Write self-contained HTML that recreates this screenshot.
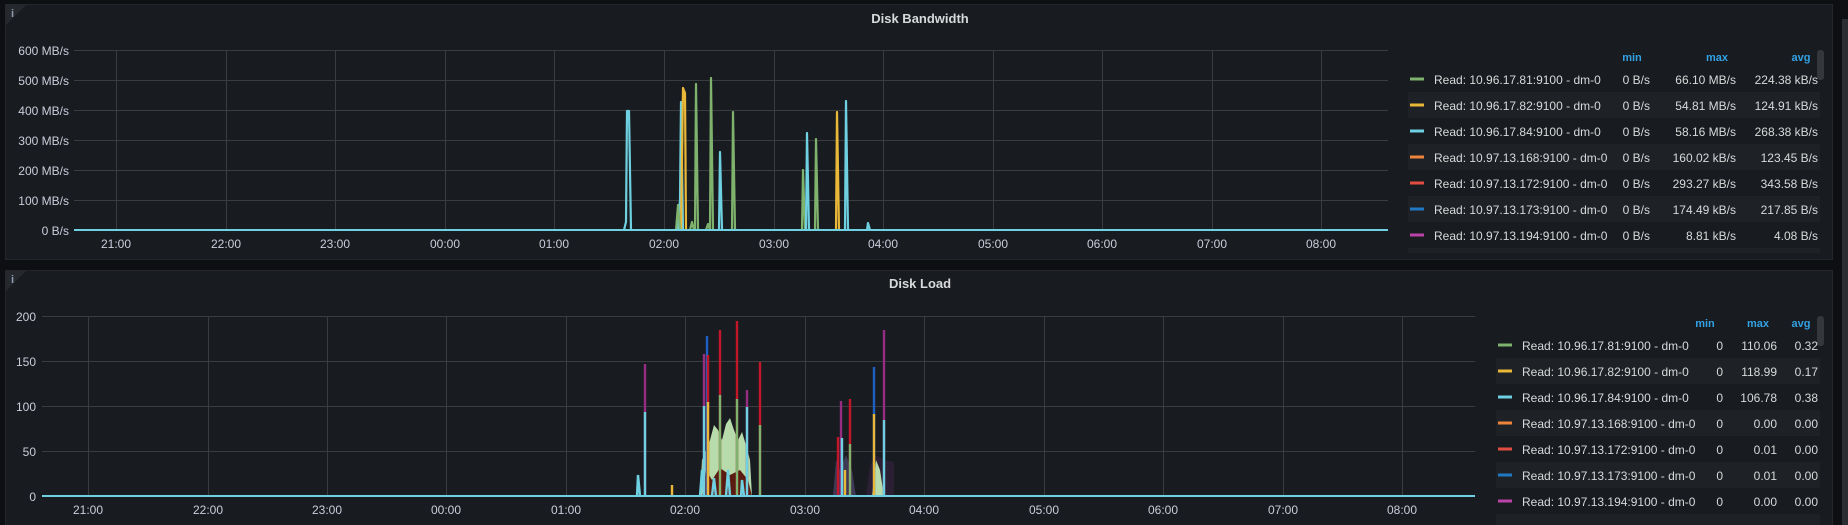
<!DOCTYPE html>
<html><head><meta charset="utf-8"><style>
html,body{margin:0;padding:0;background:#0e0f12;width:1848px;height:525px;overflow:hidden}
svg{display:block}
text{font-family:"Liberation Sans",sans-serif}
</style></head><body>
<svg width="1848" height="525" xmlns="http://www.w3.org/2000/svg">
<rect width="1848" height="525" fill="#0e0f12"/>
<!-- scrollbar -->
<rect x="1842" y="19" width="6" height="506" fill="#2a2d31"/>
<!-- panels -->
<rect x="5.5" y="4.5" width="1827" height="255" fill="#181b1f" stroke="#24262b"/>
<rect x="5.5" y="270.5" width="1827" height="260" fill="#181b1f" stroke="#24262b"/>
<polygon points="6,5 26,5 6,25" fill="#25282d"/>
<polygon points="6,271 26,271 6,291" fill="#25282d"/>
<text x="11" y="17" font-size="11" font-weight="bold" fill="#8e9bb0">i</text>
<text x="11" y="283" font-size="11" font-weight="bold" fill="#8e9bb0">i</text>
<text x="920" y="23" font-size="13" font-weight="bold" fill="#d8d9da" text-anchor="middle">Disk Bandwidth</text>
<text x="920" y="288" font-size="13" font-weight="bold" fill="#d8d9da" text-anchor="middle">Disk Load</text>

<!-- Panel 1 grid -->
<g stroke="#3a3c40" stroke-width="1">
<line x1="74" y1="50.5" x2="1388" y2="50.5"/><line x1="74" y1="80.5" x2="1388" y2="80.5"/>
<line x1="74" y1="110.5" x2="1388" y2="110.5"/><line x1="74" y1="140.5" x2="1388" y2="140.5"/>
<line x1="74" y1="170.5" x2="1388" y2="170.5"/><line x1="74" y1="200.5" x2="1388" y2="200.5"/>
<line x1="116.5" y1="50" x2="116.5" y2="230"/><line x1="226.5" y1="50" x2="226.5" y2="230"/>
<line x1="335.5" y1="50" x2="335.5" y2="230"/><line x1="445.5" y1="50" x2="445.5" y2="230"/>
<line x1="554.5" y1="50" x2="554.5" y2="230"/><line x1="664.5" y1="50" x2="664.5" y2="230"/>
<line x1="774.5" y1="50" x2="774.5" y2="230"/><line x1="883.5" y1="50" x2="883.5" y2="230"/>
<line x1="993.5" y1="50" x2="993.5" y2="230"/><line x1="1102.5" y1="50" x2="1102.5" y2="230"/>
<line x1="1212.5" y1="50" x2="1212.5" y2="230"/><line x1="1321.5" y1="50" x2="1321.5" y2="230"/>
</g>
<g font-size="12" fill="#ccccdc" text-anchor="end">
<text x="69" y="55">600 MB/s</text><text x="69" y="85">500 MB/s</text><text x="69" y="115">400 MB/s</text>
<text x="69" y="145">300 MB/s</text><text x="69" y="175">200 MB/s</text><text x="69" y="205">100 MB/s</text><text x="69" y="235">0 B/s</text>
</g>
<g font-size="12" fill="#ccccdc" text-anchor="middle">
<text x="116" y="248">21:00</text><text x="226" y="248">22:00</text><text x="335" y="248">23:00</text>
<text x="445" y="248">00:00</text><text x="554" y="248">01:00</text><text x="664" y="248">02:00</text>
<text x="774" y="248">03:00</text><text x="883" y="248">04:00</text><text x="993" y="248">05:00</text>
<text x="1102" y="248">06:00</text><text x="1212" y="248">07:00</text><text x="1321" y="248">08:00</text>
</g>
<!-- Panel 1 spikes -->
<g stroke-width="2.2" fill="none" stroke-linejoin="round">
<path d="M624,230 L626,222 L627,111 L629,111 L631,230" stroke="#6ed0e0"/>
<path d="M678,230 L680,200 L681,102 L683,230" stroke="#6ed0e0"/>
<path d="M681,230 L683,88 L685,93 L686,230" stroke="#eab839"/>
<path d="M695,230 L696,84 L698,230" stroke="#7eb26d"/>
<path d="M710,230 L711,78 L713,230" stroke="#7eb26d"/>
<path d="M719,230 L720,152 L722,230" stroke="#6ed0e0"/>
<path d="M732,230 L733,112 L735,230" stroke="#7eb26d"/>
<path d="M802,230 L803,170 L805,230" stroke="#7eb26d"/>
<path d="M806,230 L807,133 L809,230" stroke="#6ed0e0"/>
<path d="M815,230 L816,139 L818,230" stroke="#7eb26d"/>
<path d="M836,230 L837,112 L839,230" stroke="#eab839"/>
<path d="M845,230 L846,101 L848,230" stroke="#6ed0e0"/>
<path d="M867,230 L868,223 L870,230" stroke="#6ed0e0"/>
<path d="M676,230 L678,205 L680,230 M690,230 L692,222 L694,230 M706,230 L708,224 L710,230" stroke="#7eb26d"/>
</g>
<line x1="74" y1="230" x2="1388" y2="230" stroke="#6ed0e0" stroke-width="2"/>

<!-- Panel 1 legend -->
<rect x="1408" y="92" width="412" height="26" fill="#1e2125"/>
<rect x="1408" y="144" width="412" height="26" fill="#1e2125"/>
<rect x="1408" y="196" width="412" height="26" fill="#1e2125"/>
<rect x="1408" y="248" width="412" height="5" fill="#1e2125"/>
<rect x="1817" y="50" width="7" height="30" rx="3" fill="#34373c"/>
<g font-size="11" font-weight="bold" fill="#33a2e5" text-anchor="middle">
<text x="1632" y="61">min</text><text x="1717" y="61">max</text><text x="1801" y="61">avg</text>
</g>
<g font-size="12" fill="#d8d9da">
<rect x="1410" y="77.5" width="14" height="3" fill="#7eb26d"/><text x="1434" y="84">Read: 10.96.17.81:9100 - dm-0</text>
<rect x="1410" y="103.5" width="14" height="3" fill="#eab839"/><text x="1434" y="110">Read: 10.96.17.82:9100 - dm-0</text>
<rect x="1410" y="129.5" width="14" height="3" fill="#6ed0e0"/><text x="1434" y="136">Read: 10.96.17.84:9100 - dm-0</text>
<rect x="1410" y="155.5" width="14" height="3" fill="#ef843c"/><text x="1434" y="162">Read: 10.97.13.168:9100 - dm-0</text>
<rect x="1410" y="181.5" width="14" height="3" fill="#e24d42"/><text x="1434" y="188">Read: 10.97.13.172:9100 - dm-0</text>
<rect x="1410" y="207.5" width="14" height="3" fill="#1f78c1"/><text x="1434" y="214">Read: 10.97.13.173:9100 - dm-0</text>
<rect x="1410" y="233.5" width="14" height="3" fill="#ba43a9"/><text x="1434" y="240">Read: 10.97.13.194:9100 - dm-0</text>
</g>
<g font-size="12" fill="#d8d9da" text-anchor="end">
<text x="1650" y="84">0 B/s</text><text x="1736" y="84">66.10 MB/s</text><text x="1818" y="84">224.38 kB/s</text>
<text x="1650" y="110">0 B/s</text><text x="1736" y="110">54.81 MB/s</text><text x="1818" y="110">124.91 kB/s</text>
<text x="1650" y="136">0 B/s</text><text x="1736" y="136">58.16 MB/s</text><text x="1818" y="136">268.38 kB/s</text>
<text x="1650" y="162">0 B/s</text><text x="1736" y="162">160.02 kB/s</text><text x="1818" y="162">123.45 B/s</text>
<text x="1650" y="188">0 B/s</text><text x="1736" y="188">293.27 kB/s</text><text x="1818" y="188">343.58 B/s</text>
<text x="1650" y="214">0 B/s</text><text x="1736" y="214">174.49 kB/s</text><text x="1818" y="214">217.85 B/s</text>
<text x="1650" y="240">0 B/s</text><text x="1736" y="240">8.81 kB/s</text><text x="1818" y="240">4.08 B/s</text>
</g>

<!-- Panel 2 grid -->
<g stroke="#3a3c40" stroke-width="1">
<line x1="42" y1="316.5" x2="1475" y2="316.5"/><line x1="42" y1="361.5" x2="1475" y2="361.5"/>
<line x1="42" y1="406.5" x2="1475" y2="406.5"/><line x1="42" y1="451.5" x2="1475" y2="451.5"/>
<line x1="88.5" y1="316" x2="88.5" y2="496"/><line x1="208.5" y1="316" x2="208.5" y2="496"/>
<line x1="327.5" y1="316" x2="327.5" y2="496"/><line x1="446.5" y1="316" x2="446.5" y2="496"/>
<line x1="566.5" y1="316" x2="566.5" y2="496"/><line x1="685.5" y1="316" x2="685.5" y2="496"/>
<line x1="805.5" y1="316" x2="805.5" y2="496"/><line x1="924.5" y1="316" x2="924.5" y2="496"/>
<line x1="1044.5" y1="316" x2="1044.5" y2="496"/><line x1="1163.5" y1="316" x2="1163.5" y2="496"/>
<line x1="1283.5" y1="316" x2="1283.5" y2="496"/><line x1="1402.5" y1="316" x2="1402.5" y2="496"/>
</g>
<g font-size="12" fill="#ccccdc" text-anchor="end">
<text x="36" y="321">200</text><text x="36" y="366">150</text><text x="36" y="411">100</text>
<text x="36" y="456">50</text><text x="36" y="501">0</text>
</g>
<g font-size="12" fill="#ccccdc" text-anchor="middle">
<text x="88" y="514">21:00</text><text x="208" y="514">22:00</text><text x="327" y="514">23:00</text>
<text x="446" y="514">00:00</text><text x="566" y="514">01:00</text><text x="685" y="514">02:00</text>
<text x="805" y="514">03:00</text><text x="924" y="514">04:00</text><text x="1044" y="514">05:00</text>
<text x="1163" y="514">06:00</text><text x="1283" y="514">07:00</text><text x="1402" y="514">08:00</text>
</g>
<!-- Panel 2 clutter areas -->
<polygon points="700,496 702,460 706,450 710,440 714,425 718,430 722,440 726,424 730,418 734,430 738,440 742,432 746,445 750,460 752,496" fill="#b7dbab"/>
<polygon points="702,496 706,470 712,480 720,468 730,475 740,470 748,480 752,496" fill="#5a1b10"/>
<polygon points="833,496 836,460 840,470 846,455 852,470 856,496" fill="#3e3a55"/>
<polygon points="866,496 870,465 876,455 884,460 894,462 894,496" fill="#2b1f33"/>
<polygon points="872,496 876,460 880,470 884,496" fill="#b7dbab"/>
<!-- Panel 2 spikes -->
<g stroke-width="2.4" fill="none">
<path d="M645,496 L645,364" stroke="#962d82"/><path d="M645,496 L645,412" stroke="#6ed0e0"/>
<path d="M637,496 L638,475 L640,496" stroke="#6ed0e0"/>
<path d="M704,496 L704,354" stroke="#962d82"/><path d="M704,496 L704,406" stroke="#6ed0e0"/>
<path d="M707,496 L707,336" stroke="#1f60c4"/>
<path d="M708,496 L708,355" stroke="#c4162a"/><path d="M708,496 L708,402" stroke="#eab839"/>
<path d="M720,496 L720,330" stroke="#c4162a"/><path d="M720,496 L720,395" stroke="#7eb26d"/>
<path d="M737,496 L737,321" stroke="#c4162a"/><path d="M737,496 L737,399" stroke="#7eb26d"/>
<path d="M747,496 L747,390" stroke="#962d82"/><path d="M747,496 L747,407" stroke="#6ed0e0"/>
<path d="M760,496 L760,362" stroke="#c4162a"/><path d="M760,496 L760,425" stroke="#7eb26d"/>
<path d="M672,496 L672,485" stroke="#eab839"/>
<path d="M838,496 L838,437" stroke="#c4162a"/>
<path d="M841,496 L841,401" stroke="#962d82"/><path d="M842,496 L842,438" stroke="#6ed0e0"/>
<path d="M850,496 L850,399" stroke="#c4162a"/><path d="M850,496 L850,444" stroke="#7eb26d"/>
<path d="M845,496 L845,470" stroke="#eab839"/>
<path d="M874,496 L874,367" stroke="#1f60c4"/><path d="M874,496 L874,414" stroke="#eab839"/>
<path d="M884,496 L884,330" stroke="#962d82"/><path d="M884,496 L884,420" stroke="#6ed0e0"/>
<path d="M700,496 L702,470 L704,496 M712,496 L714,478 L716,496 M726,496 L728,470 L730,496 M741,496 L742,480 L744,496" stroke="#6ed0e0"/>
</g>
<line x1="42" y1="496" x2="1475" y2="496" stroke="#6ed0e0" stroke-width="2"/>

<!-- Panel 2 legend -->
<rect x="1496" y="358" width="324" height="26" fill="#1e2125"/>
<rect x="1496" y="410" width="324" height="26" fill="#1e2125"/>
<rect x="1496" y="462" width="324" height="26" fill="#1e2125"/>
<rect x="1496" y="514" width="324" height="11" fill="#1e2125"/>
<rect x="1817" y="316" width="7" height="30" rx="3" fill="#34373c"/>
<g font-size="11" font-weight="bold" fill="#33a2e5" text-anchor="middle">
<text x="1705" y="327">min</text><text x="1758" y="327">max</text><text x="1801" y="327">avg</text>
</g>
<g font-size="12" fill="#d8d9da">
<rect x="1498" y="343.5" width="14" height="3" fill="#7eb26d"/><text x="1522" y="350">Read: 10.96.17.81:9100 - dm-0</text>
<rect x="1498" y="369.5" width="14" height="3" fill="#eab839"/><text x="1522" y="376">Read: 10.96.17.82:9100 - dm-0</text>
<rect x="1498" y="395.5" width="14" height="3" fill="#6ed0e0"/><text x="1522" y="402">Read: 10.96.17.84:9100 - dm-0</text>
<rect x="1498" y="421.5" width="14" height="3" fill="#ef843c"/><text x="1522" y="428">Read: 10.97.13.168:9100 - dm-0</text>
<rect x="1498" y="447.5" width="14" height="3" fill="#e24d42"/><text x="1522" y="454">Read: 10.97.13.172:9100 - dm-0</text>
<rect x="1498" y="473.5" width="14" height="3" fill="#1f78c1"/><text x="1522" y="480">Read: 10.97.13.173:9100 - dm-0</text>
<rect x="1498" y="499.5" width="14" height="3" fill="#ba43a9"/><text x="1522" y="506">Read: 10.97.13.194:9100 - dm-0</text>
</g>
<g font-size="12" fill="#d8d9da" text-anchor="end">
<text x="1723" y="350">0</text><text x="1777" y="350">110.06</text><text x="1818" y="350">0.32</text>
<text x="1723" y="376">0</text><text x="1777" y="376">118.99</text><text x="1818" y="376">0.17</text>
<text x="1723" y="402">0</text><text x="1777" y="402">106.78</text><text x="1818" y="402">0.38</text>
<text x="1723" y="428">0</text><text x="1777" y="428">0.00</text><text x="1818" y="428">0.00</text>
<text x="1723" y="454">0</text><text x="1777" y="454">0.01</text><text x="1818" y="454">0.00</text>
<text x="1723" y="480">0</text><text x="1777" y="480">0.01</text><text x="1818" y="480">0.00</text>
<text x="1723" y="506">0</text><text x="1777" y="506">0.00</text><text x="1818" y="506">0.00</text>
</g>
</svg>
</body></html>
